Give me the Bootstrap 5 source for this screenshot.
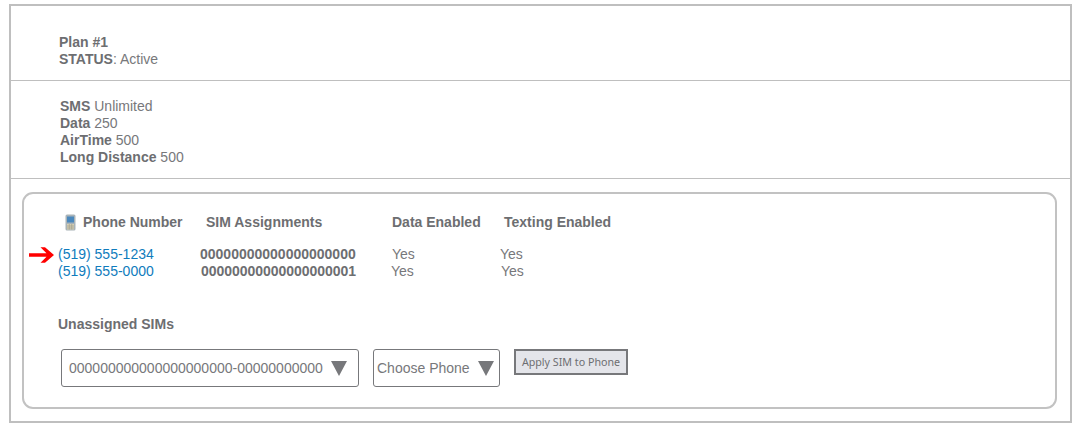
<!DOCTYPE html>
<html lang="en">
<head>
<meta charset="utf-8">
<title>Plan</title>
<link href="https://cdn.jsdelivr.net/npm/bootstrap@5.3.0/dist/css/bootstrap.min.css" rel="stylesheet">
<style>
html,body{background:#fff;}
body{font-family:"Liberation Sans",Arial,sans-serif;font-size:14px;line-height:17px;color:#77787b;padding:4px 8px 0 9px;height:432px;overflow:hidden;}
b,.fw-bold{font-weight:700;color:#6d6e71;}
.plan-frame{width:1063px;height:419px;border:2px solid #bfbfbf;}
.plan-head{height:75px;padding:28px 0 0 48px;border-bottom:1px solid #bfbfbf;}
.plan-usage{height:98px;padding:17px 0 0 49px;border-bottom:1px solid #bfbfbf;}
.sim-panel{width:1035px;height:217px;margin:13px 0 0 11px;border:2px solid #c2c2c2;border-radius:11px;padding:18px 0 0 0;position:relative;}
.sim-row{display:flex;height:17px;}
.sim-heads{height:20px;margin-bottom:14px;align-items:center;}
.ch1{width:182px;padding-left:40px;display:flex;align-items:center;gap:6px;}
.ch2{width:186px;}
.ch3{width:112px;}
.c1{width:176px;padding-left:34px;}
.c2a{width:192px;}
.c3a{width:108px;}
.c2b{width:190px;margin-left:1px;letter-spacing:-.03px;}
.c3b{width:110px;}
.c1 a{color:#0f7cbd;text-decoration:none;}
.go-arrow{position:absolute;left:5px;top:52px;}
.un-label{margin:36px 0 0 34px;}
.sim-controls{display:flex;align-items:flex-start;margin:16px 0 0 37px;}
.fake-select{height:38px;border:1px solid #77787b;border-radius:3px;background:#fff;display:flex;align-items:center;color:#77787b;font-size:14px;}
.sel-a{width:298px;padding:0 0 0 7px;justify-content:space-between;}
.sel-b{width:127px;margin-left:14px;padding:0 0 0 3px;justify-content:space-between;}
.sel-caret{width:0;height:0;border-left:8.5px solid transparent;border-right:8.5px solid transparent;border-top:15px solid #77787b;margin-right:5px;}
.sel-a .sel-caret{margin-right:11px;}
.apply-btn{width:114px;height:26px;margin:0 0 0 14px;padding:0;border:2px solid #77787b;border-radius:0;background:#e4e5ea;color:#6d6e71;font-family:"Noto Sans","Open Sans",sans-serif;font-size:10.7px;line-height:22px;text-align:center;}
</style>
</head>
<body>
<div class="plan-frame">
  <div class="plan-head"><div><b>Plan #1</b></div><div><b>STATUS</b>: Active</div></div>
  <div class="plan-usage">
    <div><b>SMS</b> Unlimited</div>
    <div><b>Data</b> 250</div>
    <div><b>AirTime</b> 500</div>
    <div><b>Long Distance</b> 500</div>
  </div>
  <div class="sim-panel">
    <svg class="go-arrow" width="26" height="18" viewBox="0 0 26 18" aria-hidden="true"><path d="M0 7.2H17.5L11.5 1.2H16L25 9L16 16.8H11.5L17.5 10.8H0Z" fill="#f00"/></svg>
    <div class="sim-row sim-heads fw-bold">
      <div class="ch1">
        <svg width="13" height="17" viewBox="0 0 13 17" aria-hidden="true"><rect x="1.5" y="0.5" width="10" height="16" rx="1.5" fill="#a9b3b8"/><rect x="3" y="2.5" width="7" height="6" fill="#4b88bd"/><rect x="3" y="10" width="7" height="5.5" fill="#d6cfb4"/><path d="M3 12H10M3 14H10M5.3 10V15.5M7.7 10V15.5" stroke="#9a9a8c" stroke-width=".6"/></svg>
        <span>Phone Number</span>
      </div>
      <div class="ch2">SIM Assignments</div>
      <div class="ch3">Data Enabled</div>
      <div>Texting Enabled</div>
    </div>
    <div class="sim-row">
      <div class="c1"><a href="#">(519) 555-1234</a></div>
      <div class="c2a fw-bold">00000000000000000000</div>
      <div class="c3a">Yes</div>
      <div>Yes</div>
    </div>
    <div class="sim-row">
      <div class="c1"><a href="#">(519) 555-0000</a></div>
      <div class="c2b fw-bold">00000000000000000001</div>
      <div class="c3b">Yes</div>
      <div>Yes</div>
    </div>
    <div class="un-label fw-bold">Unassigned SIMs</div>
    <div class="sim-controls">
      <div class="fake-select sel-a"><span>000000000000000000000-00000000000</span><i class="sel-caret"></i></div>
      <div class="fake-select sel-b"><span>Choose Phone</span><i class="sel-caret"></i></div>
      <button type="button" class="btn apply-btn">Apply SIM to Phone</button>
    </div>
  </div>
</div>
<script src="https://cdn.jsdelivr.net/npm/bootstrap@5.3.0/dist/js/bootstrap.bundle.min.js"></script>
</body>
</html>
